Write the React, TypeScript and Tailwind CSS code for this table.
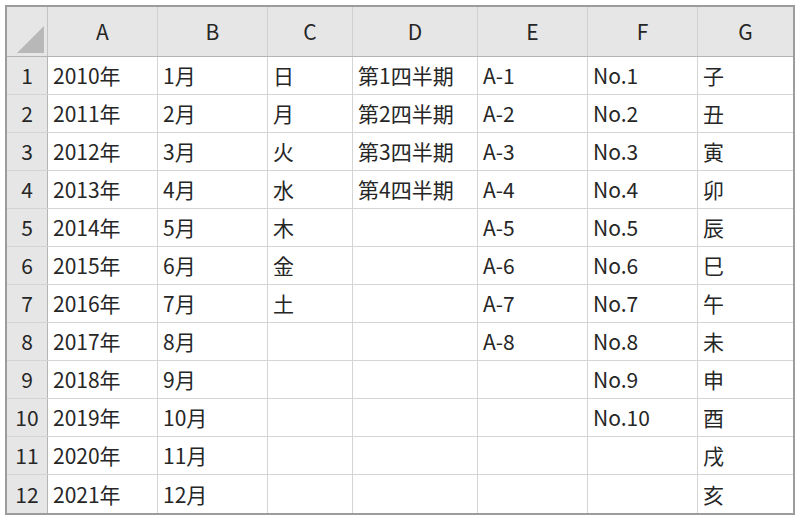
import React from 'react';

const cols = ['A', 'B', 'C', 'D', 'E', 'F', 'G'];

const rows: string[][] = [
  ['2010年', '1月', '日', '第1四半期', 'A-1', 'No.1', '子'],
  ['2011年', '2月', '月', '第2四半期', 'A-2', 'No.2', '丑'],
  ['2012年', '3月', '火', '第3四半期', 'A-3', 'No.3', '寅'],
  ['2013年', '4月', '水', '第4四半期', 'A-4', 'No.4', '卯'],
  ['2014年', '5月', '木', '', 'A-5', 'No.5', '辰'],
  ['2015年', '6月', '金', '', 'A-6', 'No.6', '巳'],
  ['2016年', '7月', '土', '', 'A-7', 'No.7', '午'],
  ['2017年', '8月', '', '', 'A-8', 'No.8', '未'],
  ['2018年', '9月', '', '', '', 'No.9', '申'],
  ['2019年', '10月', '', '', '', 'No.10', '酉'],
  ['2020年', '11月', '', '', '', '', '戌'],
  ['2021年', '12月', '', '', '', '', '亥'],
];

const gridCols = 'grid grid-cols-[41px_110px_110px_85px_125px_110px_110px_1fr]';

export default function App() {
  return (
    <div className="w-[800px] h-[520px] bg-white pt-[5px] pl-[5px] font-['Noto_Sans_CJK_JP','Noto_Sans',sans-serif] text-[21px] text-[#262626]">
      <div className="w-[790px] border-2 border-[#9c9c9c]">
        {/* 列ヘッダー */}
        <div className={`${gridCols} h-[50px] bg-[#e6e6e6] border-b border-[#b4b4b4]`}>
          <div className="flex items-end justify-end pr-[3px] pb-[3px] border-r border-[#c4c4c4]">
            <div className="w-0 h-0 border-l-[27px] border-l-transparent border-b-[27px] border-b-[#b8b8b8]" />
          </div>
          {cols.map((c, i) => (
            <div
              key={c}
              className={`flex items-center justify-center leading-none ${
                i < cols.length - 1 ? 'border-r border-[#d0d0d0]' : ''
              }`}
            >
              {c}
            </div>
          ))}
        </div>

        {/* 行 */}
        {rows.map((r, ri) => (
          <div
            key={ri}
            className={`${gridCols} h-[38px] ${ri < rows.length - 1 ? 'border-b border-[#d4d4d4]' : ''}`}
          >
            <div className="flex items-center justify-center bg-[#e6e6e6] border-r border-[#b4b4b4] leading-none">
              {ri + 1}
            </div>
            {r.map((v, ci) => (
              <div
                key={ci}
                className={`flex items-center pl-[5px] leading-none whitespace-nowrap ${
                  ci < r.length - 1 ? 'border-r border-[#d4d4d4]' : ''
                }`}
              >
                {v}
              </div>
            ))}
          </div>
        ))}
      </div>
    </div>
  );
}
